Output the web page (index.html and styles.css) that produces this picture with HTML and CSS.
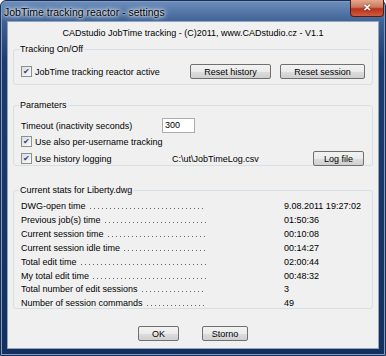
FILE: index.html
```html
<!DOCTYPE html>
<html lang="en">
<head>
    <meta charset="UTF-8">
    <title>JobTime tracking reactor - settings</title>
    <link rel="stylesheet" href="styles.css">
</head>
<body>
<div class="window">

    <div class="window__title">
        <span class="window__caption">JobTime tracking reactor - settings</span>
        <span class="window__close">&#x2715;</span>
    </div>

    <form action="#" class="settings">

        <p class="settings__header">CADstudio JobTime tracking - (C)2011, www.CADstudio.cz - V1.1</p>

        <fieldset class="group group--tracking">
            <legend class="group__title">Tracking On/Off</legend>
            <div class="row">
                <label class="check">
                    <span class="check__box">&#x2714;</span>
                    <span>JobTime tracking reactor active</span>
                </label>
                <button type="button" class="btn btn--reset-history">Reset history</button>
                <button type="button" class="btn btn--reset-session">Reset session</button>
            </div>
        </fieldset>

        <fieldset class="group group--params">
            <legend class="group__title">Parameters</legend>
            <div class="row row--timeout">
                <span class="label">Timeout (inactivity seconds)</span>
                <span class="field">300</span>
            </div>
            <div class="row row--user">
                <label class="check">
                    <span class="check__box">&#x2714;</span>
                    <span>Use also per-username tracking</span>
                </label>
            </div>
            <div class="row row--log">
                <label class="check check--log">
                    <span class="check__box">&#x2714;</span>
                    <span>Use history logging</span>
                </label>
                <span class="path">C:\ut\JobTimeLog.csv</span>
                <button type="button" class="btn btn--log">Log file</button>
            </div>
        </fieldset>

        <fieldset class="group group--stats">
            <legend class="group__title">Current stats for Liberty.dwg</legend>
            <div class="stats">
                <span class="stats__name">DWG-open time</span><span class="stats__value">9.08.2011 19:27:02</span>
                <span class="stats__name">Previous job(s) time</span><span class="stats__value">01:50:36</span>
                <span class="stats__name">Current session time</span><span class="stats__value">00:10:08</span>
                <span class="stats__name">Current session idle time</span><span class="stats__value">00:14:27</span>
                <span class="stats__name">Total edit time</span><span class="stats__value">02:00:44</span>
                <span class="stats__name">My total edit time</span><span class="stats__value">00:48:32</span>
                <span class="stats__name">Total number of edit sessions</span><span class="stats__value">3</span>
                <span class="stats__name">Number of session commands</span><span class="stats__value">49</span>
            </div>
        </fieldset>

        <div class="actions">
            <button type="submit" class="btn btn--ok">OK</button>
            <button type="button" class="btn btn--cancel">Storno</button>
        </div>

    </form>
</div>
</body>
</html>
```

FILE: styles.css
```css
html {
    height: 100%;
}

body {
    margin: 0;
    background: #fff;
    font-family: "Liberation Sans", Arial, sans-serif;
    font-size: 9px;
    color: #000;
}

.window {
    display: flex;
    flex-direction: column;
    width: 386px;
    height: 356px;
    box-sizing: border-box;
    padding: 0 6px 6px 6px;
    border: 1px solid #1c2f52;
    border-radius: 6px 6px 0 0;
    background: linear-gradient(to bottom, #6d8fbd 0, #3d5f91 22px, #1d3b6e 60px, #14305e 100%);
    box-shadow: inset 0 0 0 1px #7f9cc6;
}

.window__title {
    display: flex;
    align-items: flex-start;
    height: 20px;
    margin: 0 -4px;
}
.window__caption {
    padding: 5px 0 0 1px;
    font-family: "Liberation Sans", Arial, sans-serif;
    font-size: 10.5px;
    color: #000;
    text-shadow: 0 0 6px #e6eef8, 0 0 4px #e6eef8, 0 0 2px #fff;
}
.window__close {
    margin-left: auto;
    width: 34px;
    height: 17px;
    margin-top: -1px;
    margin-right: -1px;
    box-sizing: border-box;
    border: 1px solid #5a1a12;
    border-top: none;
    border-radius: 0 0 4px 4px;
    background: linear-gradient(to bottom, #e4a98f 0, #c9785e 45%, #b7321c 55%, #cf5b3c 100%);
    color: #fff;
    font-size: 10px;
    font-weight: bold;
    line-height: 16px;
    text-align: center;
    text-shadow: 0 0 2px #5a1a12;
}

.settings {
    flex: 1;
    display: flex;
    flex-direction: column;
    padding: 0 5px;
    background: #f0f0f0;
    border: 1px solid #8fa5c2;
}

.settings__header {
    margin: 6px 0 0;
    text-align: center;
}

.group {
    margin: 0;
    padding: 0 7px;
    border: 1px solid #d5dfe5;
    border-radius: 3px;
    box-sizing: border-box;
}
.group__title {
    margin-left: -2px;
    padding: 0 1px;
}
.group--tracking {
    margin-top: 6px;
    height: 41px;
}
.group--params {
    margin-top: 15px;
    height: 66px;
}
.group--stats {
    margin-top: 19px;
    height: 124px;
}

.row {
    display: flex;
    align-items: center;
}
.group--tracking .row {
    margin-top: 10px;
}

.check {
    display: flex;
    align-items: center;
    gap: 3px;
}
.check__box {
    width: 9px;
    height: 9px;
    border: 1px solid #8e8f8f;
    background: linear-gradient(135deg, #dcdcdc, #fbfbfb);
    color: #2a3e8c;
    font-size: 8px;
    line-height: 9px;
    text-align: center;
}

.btn {
    height: 15px;
    padding: 0;
    box-sizing: border-box;
    border: 1px solid #707070;
    border-radius: 2px;
    background: linear-gradient(to bottom, #f2f2f2 0, #ebebeb 50%, #dddddd 51%, #cfcfcf 100%);
    font-family: inherit;
    font-size: 9px;
    color: #000;
}
.btn--reset-history {
    width: 81px;
    margin-left: auto;
}
.btn--reset-session {
    width: 85px;
    margin-left: 9px;
}

.row--timeout {
    margin-top: 8px;
}
.label {
    width: 141px;
}
.field {
    width: 33px;
    height: 15px;
    box-sizing: border-box;
    padding: 1px 0 0 2px;
    border: 1px solid #abadb3;
    background: #fff;
    font-size: 9px;
}
.row--user {
    margin-top: 3px;
}
.row--log {
    margin-top: 4px;
}
.check--log {
    width: 151px;
}
.path {
    margin-right: auto;
}
.btn--log {
    width: 51px;
    margin-right: 1px;
}

.stats {
    display: grid;
    grid-template-columns: 185px auto;
    column-gap: 78px;
    margin-top: 5px;
    line-height: 13.9px;
}
.stats__name {
    display: flex;
    align-items: baseline;
}
.stats__name::after {
    content: "";
    flex: 1;
    height: 1px;
    margin-left: 4px;
    background: repeating-linear-gradient(to right, #666 0, #666 1px, transparent 1px, transparent 4px);
}

.actions {
    display: flex;
    justify-content: center;
    gap: 23px;
    margin-top: 17px;
}
.btn--ok {
    width: 41px;
}
.btn--cancel {
    width: 46px;
}
```
